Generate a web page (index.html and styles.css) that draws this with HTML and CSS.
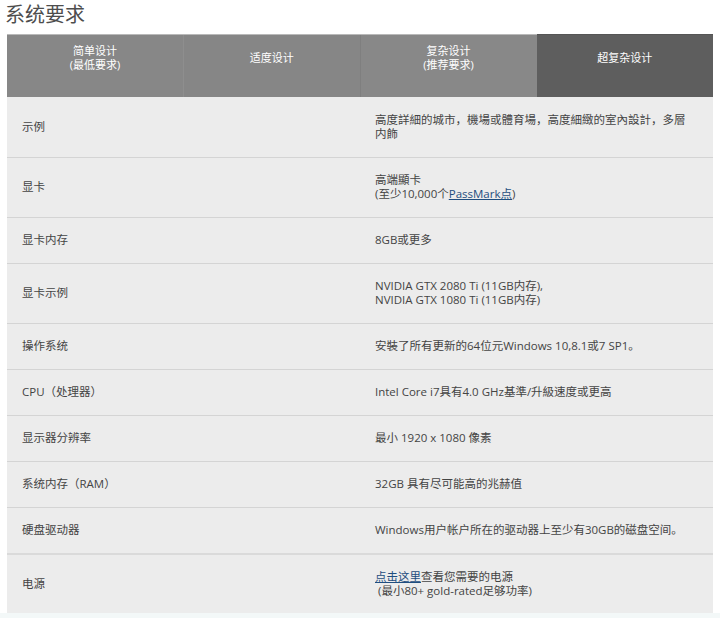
FILE: index.html
```html
<!DOCTYPE html>
<html lang="zh">
<head>
<meta charset="utf-8">
<title>系统要求</title>
<link rel="stylesheet" href="styles.css">
</head>
<body>
<div class="page">
  <h2 class="title">系统要求</h2>
  <table class="req">
    <colgroup><col><col><col><col></colgroup>
    <thead>
      <tr>
        <th class="h h1">简单设计<br>(最低要求)</th>
        <th class="h h2">适度设计</th>
        <th class="h h3">复杂设计<br>(推荐要求)</th>
        <th class="h h4">超复杂设计</th>
      </tr>
    </thead>
    <tbody>
      <tr><td colspan="2" class="label">示例</td><td colspan="2" class="val">高度詳細的城市，機場或體育場，高度細緻的室內設計，多層内飾</td></tr>
      <tr><td colspan="2" class="label">显卡</td><td colspan="2" class="val">高端顯卡<br>(至少10,000个<a href="#">PassMark点</a>)</td></tr>
      <tr><td colspan="2" class="label">显卡内存</td><td colspan="2" class="val">8GB或更多</td></tr>
      <tr><td colspan="2" class="label">显卡示例</td><td colspan="2" class="val">NVIDIA GTX 2080 Ti (11GB内存),<br>NVIDIA GTX 1080 Ti (11GB内存)</td></tr>
      <tr><td colspan="2" class="label">操作系统</td><td colspan="2" class="val">安裝了所有更新的64位元Windows 10,8.1或7 SP1。</td></tr>
      <tr><td colspan="2" class="label">CPU（处理器）</td><td colspan="2" class="val">Intel Core i7具有4.0 GHz基準/升級速度或更高</td></tr>
      <tr><td colspan="2" class="label">显示器分辨率</td><td colspan="2" class="val">最小 1920 x 1080 像素</td></tr>
      <tr><td colspan="2" class="label">系统内存（RAM）</td><td colspan="2" class="val">32GB 具有尽可能高的兆赫值</td></tr>
      <tr><td colspan="2" class="label">硬盘驱动器</td><td colspan="2" class="val">Windows用户帐户所在的驱动器上至少有30GB的磁盘空间。</td></tr>
      <tr class="last"><td colspan="2" class="label">电源</td><td colspan="2" class="val"><a href="#">点击这里</a>查看您需要的电源<br>&nbsp;(最小80+ gold-rated足够功率)</td></tr>
    </tbody>
  </table>
  <div class="foot"></div>
</div>
</body>
</html>
```

FILE: styles.css
```css
html, body {
  margin: 0;
  padding: 0;
  background: #ffffff;
}

.page {
  width: 720px;
  font-family: "Open Sans", "Noto Sans CJK SC", sans-serif;
  color: #444444;
}

.title {
  margin: 0;
  padding: 0 0 0 5px;
  height: 34px;
  font-size: 20px;
  line-height: 28px;
  font-weight: normal;
  color: #4d4d4d;
  font-family: "Noto Sans CJK SC", sans-serif;
}

.req {
  margin: 0 7px;
  width: 706px;
  border-collapse: collapse;
  table-layout: fixed;
}

.h {
  color: #ffffff;
  font-weight: normal;
  font-size: 11px;
  line-height: 14px;
  text-align: center;
  vertical-align: middle;
  height: 32px;
  padding: 7px 4px 23px;
  border-top: 1px solid #b9b9b9;
}

.h1 { background: #878787; }
.h2 { background: #868686; border-left: 1px solid #8e8e8e; }
.h3 { background: #888888; border-left: 1px solid #7f7f7f; }
.h4 { background: #5e5e5e; border-top-color: #555555; }

.req tbody td {
  background: #ececec;
  font-size: 11.5px;
  line-height: 14px;
  vertical-align: middle;
  padding: 15px 25px 16px 15px;
  border-top: 1px solid #d4d4d4;
}

.req tbody tr:first-child td {
  border-top: 0;
  padding-top: 16px;
}

.req tbody tr.last td {
  border-top: 2px solid #dadada;
  padding-top: 15px;
  padding-bottom: 15px;
}

.req a {
  color: #1f4e80;
  text-decoration: underline;
}

.foot {
  height: 7px;
  background: #f3f8f8;
}
```
